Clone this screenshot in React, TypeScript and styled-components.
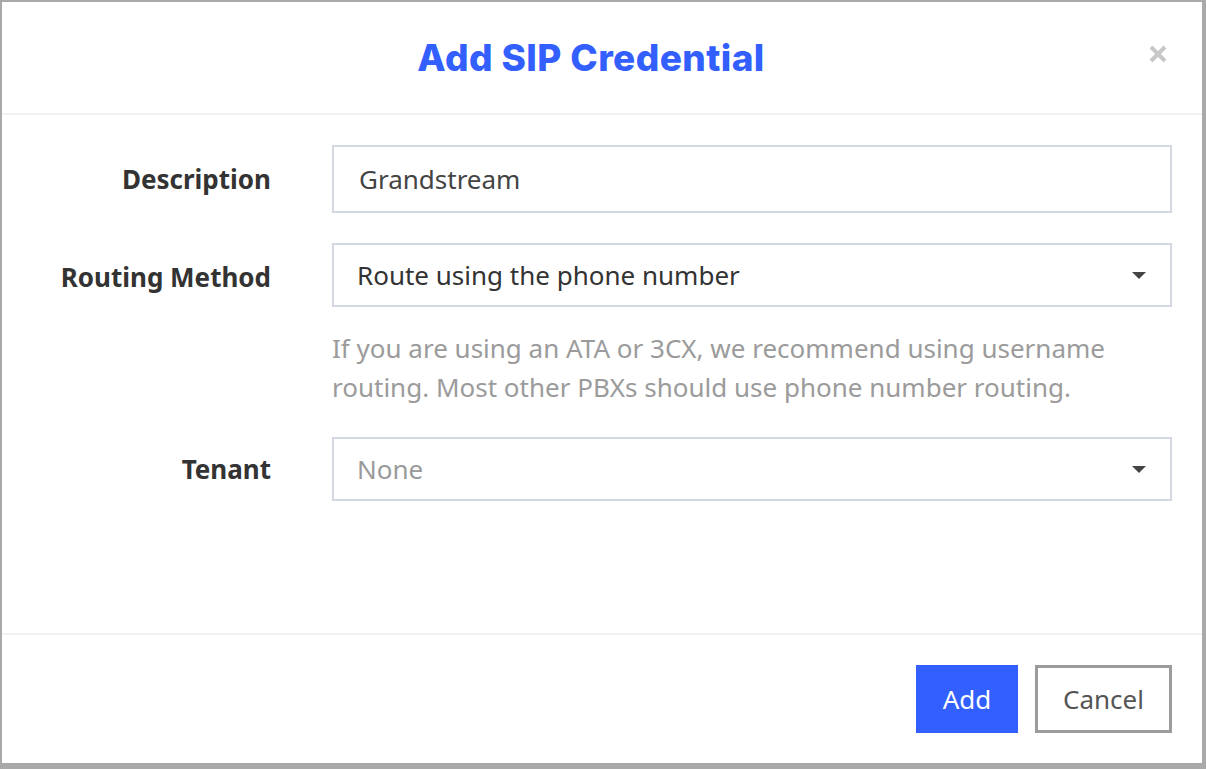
import { createGlobalStyle, styled } from "styled-components";

const GlobalStyle = createGlobalStyle`
    html, body {
        margin: 0;
        padding: 0;
        background-color: #a9a9a9;
    }
    * {
        box-sizing: border-box;
    }
`

const Page = styled.div`
    width: 1206px;
    height: 769px;
    padding: 2px 4px 6px 2px;
`

const Dialog = styled.div`
    height: 100%;
    display: flex;
    flex-direction: column;
    background-color: #ffffff;
    font-family: "Noto Sans", "Open Sans", sans-serif;
`

const Header = styled.div`
    position: relative;
    height: 113px;
    display: flex;
    align-items: center;
    justify-content: center;
    border-bottom: 2px solid #f2f2f2;
`

const Title = styled.h1`
    margin: 0;
    font-family: Inter, "Open Sans", sans-serif;
    font-weight: 800;
    font-size: 37px;
    letter-spacing: 0.4px;
    color: #335fff;
    transform: translateX(-11px);
`

const CloseButton = styled.button`
    position: absolute;
    right: 33px;
    top: 41px;
    width: 22px;
    height: 22px;
    padding: 0;
    border: none;
    background: none;
    display: flex;
    align-items: center;
    justify-content: center;
`

const Body = styled.div`
    flex: 1;
    padding: 30px 30px 0 0;
    display: grid;
    grid-template-columns: 269px 1fr;
    column-gap: 61px;
    row-gap: 30px;
    align-content: start;
`

const Label = styled.label<{ $top?: boolean }>`
    justify-self: end;
    align-self: ${props => props.$top ? "start" : "center"};
    margin-top: ${props => props.$top ? "16px" : "0"};
    font-weight: 700;
    font-size: 26px;
    color: #333333;
`

const Field = styled.div`
    display: flex;
    flex-direction: column;
`

const TextInput = styled.div`
    height: 68px;
    border: 2px solid #d3d8e2;
    padding: 0 25px;
    display: flex;
    align-items: center;
    font-size: 26px;
    color: #444444;
`

const Select = styled.div<{ $placeholder?: boolean }>`
    height: 64px;
    border: 2px solid #d3d8e2;
    padding: 0 24px 0 23px;
    display: flex;
    align-items: center;
    justify-content: space-between;
    font-size: 26px;
    color: ${props => props.$placeholder ? "#9a9a9a" : "#333333"};
`

const Help = styled.p`
    margin: 22px 0 0 0;
    font-size: 26px;
    line-height: 39px;
    color: #9b9b9b;
`

const Footer = styled.div`
    border-top: 2px solid #f2f2f2;
    padding: 30px 30px 30px 0;
    display: flex;
    justify-content: flex-end;
    gap: 17px;
`

const Button = styled.button<{ $primary?: boolean }>`
    height: 68px;
    padding: 0;
    font-family: "Noto Sans", "Open Sans", sans-serif;
    font-size: 26px;
    border: ${props => props.$primary ? "none" : "3px solid #9b9b9b"};
    background-color: ${props => props.$primary ? "#335fff" : "#ffffff"};
    color: ${props => props.$primary ? "#ffffff" : "#555555"};
    width: ${props => props.$primary ? "102px" : "137px"};
`

const Caret = () => (
    <svg width="14" height="7" viewBox="0 0 14 7">
        <path d="M0 0 H14 L7 7 Z" fill="#444444" />
    </svg>
)

function App() {
    return (
        <>
            <GlobalStyle />
            <Page>
                <Dialog>
                    <Header>
                        <Title>Add SIP Credential</Title>
                        <CloseButton aria-label="Close">
                            <svg width="18" height="18" viewBox="0 0 18 18">
                                <path d="M2 2 L16 16 M16 2 L2 16" stroke="#c8c8c8" strokeWidth="4" />
                            </svg>
                        </CloseButton>
                    </Header>
                    <Body>
                        <Label>Description</Label>
                        <TextInput>Grandstream</TextInput>
                        <Label $top>Routing Method</Label>
                        <Field>
                            <Select>
                                <span>Route using the phone number</span>
                                <Caret />
                            </Select>
                            <Help>
                                If you are using an ATA or 3CX, we recommend using username routing. Most other PBXs should use phone number routing.
                            </Help>
                        </Field>
                        <Label>Tenant</Label>
                        <Select $placeholder>
                            <span>None</span>
                            <Caret />
                        </Select>
                    </Body>
                    <Footer>
                        <Button $primary>Add</Button>
                        <Button>Cancel</Button>
                    </Footer>
                </Dialog>
            </Page>
        </>
    )
}

export default App;
